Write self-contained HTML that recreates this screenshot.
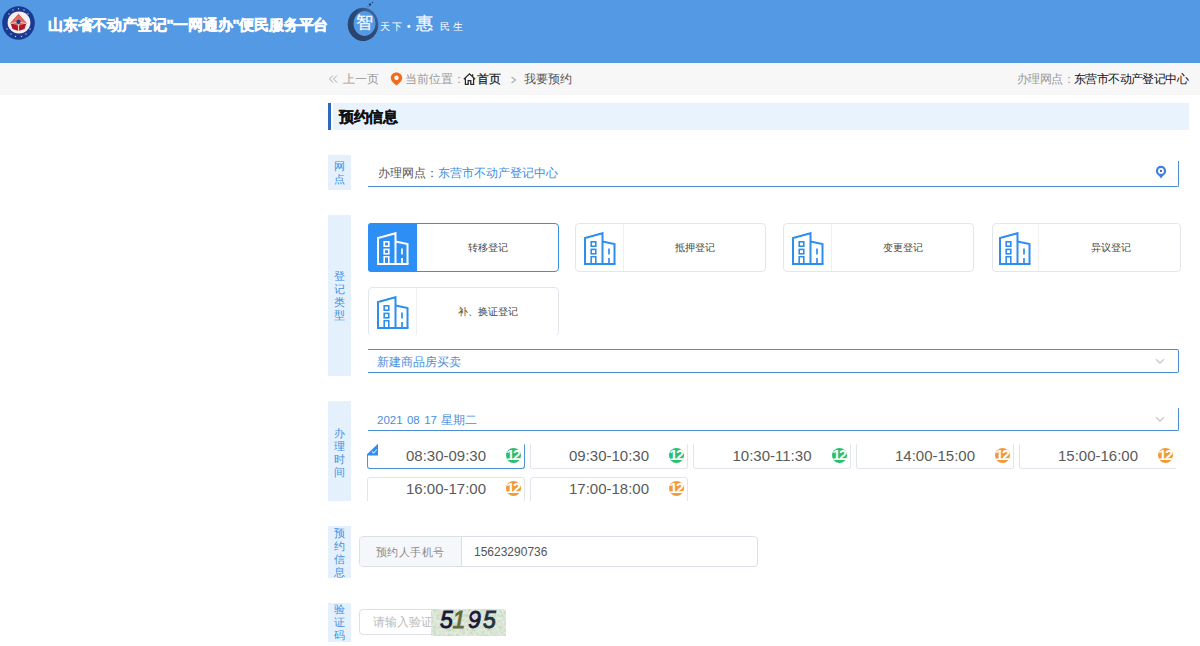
<!DOCTYPE html>
<html><head><meta charset="utf-8">
<style>
*{margin:0;padding:0;box-sizing:border-box}
html,body{width:1200px;height:646px;overflow:hidden;background:#fff;font-family:"Liberation Sans",sans-serif;position:relative}
.abs{position:absolute;white-space:nowrap}
#hdr{position:absolute;left:0;top:0;width:1200px;height:63px;background:#5499e3}
#crumb{position:absolute;left:0;top:63px;width:1200px;height:32px;background:#f7f7f7}
.t12{font-size:12px;line-height:16px}
.lab{position:absolute;left:328px;width:23px;background:#e4f1fd;color:#3f8fe4;font-size:11px;line-height:13px;text-align:center;display:flex;align-items:center;justify-content:center;white-space:normal;word-break:break-all}
.lab span{display:block;width:12px}
.card{position:absolute;width:190px;height:49px;border:1px solid #e3e6eb;border-radius:4px;background:#fff}
.card .ic{position:absolute;left:0;top:0;width:48px;height:47px;border-right:1px solid #eef0f3}
.card .ic svg{position:absolute;left:8px;top:8px}
.card .tx{position:absolute;left:48px;right:0;top:0;height:47px;line-height:47px;text-align:center;font-size:10px;color:#444}
.card.sel{border-color:#3c8ee4}
.card.sel .ic{background:#2d8ff5;border-right:none;border-radius:3px 0 0 3px;left:-1px;top:-1px;width:49px;height:49px}
.card.sel .ic svg{left:9px;top:9px}
.slot{position:absolute;width:158px;height:25px;border:1px solid #e2e6ec;border-top-color:#fff;border-radius:0 0 3px 3px}
.slot .tm{position:absolute;left:0;right:0;top:3px;text-align:center;font-size:15px;line-height:16px;color:#5a5a5a}
.slot .bd{position:absolute;right:3px;top:3px;width:15px;height:15px;border-radius:50%;color:#fff;font-weight:bold;font-size:14.5px;line-height:15px;text-align:center;letter-spacing:-1.6px;text-indent:-1px;overflow:visible}
.slot.r2{border-top-color:#e2e6ec;border-radius:3px 3px 0 0}
.slot.sel{border-color:#4d92dc;border-top-color:#fff}
.g{background:#28c06a}.o{background:#f39a36}
</style></head><body>
<div id="hdr"></div>
<div id="crumb"></div>

<!-- logo -->
<svg class="abs" style="left:0px;top:0px" width="40" height="44" viewBox="0 0 40 44">
 <ellipse cx="18.5" cy="23" rx="16.3" ry="16.8" fill="#1a3a92"/>
 <ellipse cx="19" cy="22.5" rx="11.4" ry="11" fill="#f3f0f3"/>
 <g fill="#fff" opacity="0.75"><circle cx="9" cy="14" r="0.7"/><circle cx="13" cy="10" r="0.7"/><circle cx="18.5" cy="8.7" r="0.7"/><circle cx="24" cy="10" r="0.7"/><circle cx="28" cy="14" r="0.7"/>
 <circle cx="7" cy="29" r="0.7"/><circle cx="11" cy="34" r="0.7"/><circle cx="15.5" cy="36.5" r="0.7"/><circle cx="21.5" cy="36.5" r="0.7"/><circle cx="26" cy="34" r="0.7"/><circle cx="30" cy="29" r="0.7"/></g>
 <path d="M18.5 14 L26.5 23 L24.5 29 L18.5 31 L12.5 29 L10.5 23 Z" fill="#b3162a"/>
 <path d="M18.5 14 L26.5 23 L18.5 26 L10.5 23 Z" fill="#e06a5e"/>
 <path d="M11 23.5 L18.5 22 L26 23.5 M18.5 22 V31" stroke="#f2c8b8" stroke-width="1.2" fill="none"/>
 <circle cx="18.5" cy="21.8" r="2.1" fill="#1a3a92"/>
</svg>
<div class="abs" style="left:48px;top:14px;font-size:15px;line-height:22px;font-weight:bold;color:#fff;letter-spacing:-0.2px;-webkit-text-stroke:0.5px #fff">山东省不动产登记"一网通办"便民服务平台</div>
<!-- slogan -->
<svg class="abs" style="left:340px;top:0px" width="50" height="46" viewBox="340 0 50 46">
 <defs><linearGradient id="rg" x1="0" y1="1" x2="1" y2="0"><stop offset="0" stop-color="#273f66"/><stop offset="0.6" stop-color="#2b4a78"/><stop offset="1" stop-color="#4a78b8"/></linearGradient></defs>
 <path fill-rule="evenodd" fill="url(#rg)" d="M378.3 24.4 A15.3 16.7 0 1 1 378.3 24.39 Z M375.5 23.5 A11 12.5 0 1 0 375.5 23.51 Z"/>
 <circle cx="370" cy="4.5" r="1.2" fill="#26406a"/><circle cx="372.5" cy="2.5" r="0.7" fill="#26406a"/><circle cx="368" cy="6.5" r="0.5" fill="#26406a"/>
</svg>
<div class="abs" style="left:356px;top:12px;font-size:17px;line-height:22px;color:#f4f8ff;-webkit-text-stroke:0.3px #f4f8ff">智</div>
<div class="abs" style="left:380px;top:20px;font-family:'Liberation Serif',serif;font-size:10px;line-height:14px;color:#fff;letter-spacing:2px">天下</div>
<div class="abs" style="left:407px;top:20px;font-size:10px;line-height:14px;color:#fff;font-weight:bold">•</div>
<div class="abs" style="left:416px;top:12px;font-family:'Liberation Serif',serif;font-size:17px;line-height:24px;color:#f4f8ff;-webkit-text-stroke:0.3px #f4f8ff">惠</div>
<div class="abs" style="left:440px;top:20px;font-family:'Liberation Serif',serif;font-size:10px;line-height:14px;color:#fff;letter-spacing:3px">民生</div>

<!-- breadcrumb -->
<svg class="abs" style="left:328px;top:75px" width="10" height="8" viewBox="0 0 10 8"><path d="M5 0.5 L1.5 4 L5 7.5 M9 0.5 L5.5 4 L9 7.5" stroke="#a8a8a8" stroke-width="1" fill="none"/></svg>
<div class="abs t12" style="left:343px;top:71px;color:#999">上一页</div>
<svg class="abs" style="left:390px;top:72px" width="13" height="14" viewBox="0 0 13 14">
 <path d="M6.5 0.5 C3.2 0.5 0.8 2.9 0.8 6 C0.8 9 4 11.5 6.5 13.6 C9 11.5 12.2 9 12.2 6 C12.2 2.9 9.8 0.5 6.5 0.5 Z" fill="#f26d1b"/>
 <circle cx="6.5" cy="5.8" r="2.2" fill="#fff"/>
</svg>
<div class="abs t12" style="left:405px;top:71px;color:#999">当前位置：</div>
<svg class="abs" style="left:463px;top:73px" width="13" height="12" viewBox="0 0 13 12">
 <path d="M0.8 6.2 L6.5 0.9 L12.2 6.2 M2.4 4.8 V11.3 H5.2 V7.6 H7.8 V11.3 H10.6 V4.8 M9.6 1.3 V3.8" stroke="#2a2a2a" stroke-width="1.25" fill="none" stroke-linejoin="miter"/>
</svg>
<div class="abs t12" style="left:477px;top:71px;color:#1a1a1a;-webkit-text-stroke:0.25px #1a1a1a">首页</div>
<svg class="abs" style="left:510px;top:76px" width="7" height="8" viewBox="0 0 7 8"><path d="M1.5 1 L5.5 4 L1.5 7" stroke="#a9adb5" stroke-width="1.2" fill="none"/></svg>
<div class="abs t12" style="left:524px;top:71px;color:#555">我要预约</div>
<div class="abs" style="left:1017px;top:71px;font-size:12px;line-height:16px;color:#999;letter-spacing:-0.6px">办理网点：<span style="color:#111">东营市不动产登记中心</span></div>

<!-- title -->
<div class="abs" style="left:328px;top:103px;width:3px;height:27px;background:#3068c0"></div>
<div class="abs" style="left:333px;top:103px;width:856px;height:27px;background:#e9f3fd"></div>
<div class="abs" style="left:339px;top:106px;font-size:15px;line-height:21px;font-weight:bold;color:#111;letter-spacing:-0.4px;-webkit-text-stroke:0.3px #111">预约信息</div>

<!-- labels -->
<div class="lab" style="top:155px;height:35px"><span>网点</span></div>
<div class="lab" style="top:215px;height:161px"><span>登记类型</span></div>
<div class="lab" style="top:401px;height:100px;padding-top:3px"><span>办理时间</span></div>
<div class="lab" style="top:526px;height:52px;padding-top:2px"><span>预约信息</span></div>
<div class="lab" style="top:603px;height:39px"><span>验证码</span></div>

<!-- site input -->
<div class="abs" style="left:368px;top:161px;width:811px;height:26px;border-bottom:1px solid #4a8ad6;border-right:1px solid #4a8ad6;border-radius:0 0 2px 0"></div>
<div class="abs t12" style="left:378px;top:165px;color:#555">办理网点：<span style="color:#3f8ee0">东营市不动产登记中心</span></div>
<svg class="abs" style="left:1155px;top:165px" width="12" height="15" viewBox="0 0 12 15">
 <path d="M2.2 8.5 L6 13.6 L9.8 8.5 Z" fill="#3f7fe0"/>
 <circle cx="6" cy="5.9" r="4" fill="#fff" stroke="#3f7fe0" stroke-width="2.2"/><circle cx="6" cy="5.9" r="1.1" fill="#3a5c9a"/>
</svg>

<!-- cards -->
<div class="card sel" style="left:368px;top:223px;width:191px"><div class="ic"><svg width="32" height="33" viewBox="0 0 32 33"><g fill="none" stroke="#fff" stroke-width="2" stroke-linejoin="miter">
<path d="M1 32 V6 L18.5 1.2 V32"/><path d="M18.5 9.5 L30.5 12 V32"/><path d="M0 32 H31.5"/>
<g stroke-width="1.6"><rect x="7.2" y="9.8" width="4.6" height="4.4"/><rect x="7.2" y="17.4" width="4.6" height="4.4"/><path d="M7.2 32 V24.8 H11.8 V32"/></g>
<path d="M25 16.5 V22.5 M25 26 V32" stroke-width="1.7"/></g></svg></div><div class="tx">转移登记</div></div>
<div class="card" style="left:575px;top:223px;width:191px"><div class="ic"><svg width="32" height="33" viewBox="0 0 32 33"><g fill="none" stroke="#2e8ef0" stroke-width="2" stroke-linejoin="miter">
<path d="M1 32 V6 L18.5 1.2 V32"/><path d="M18.5 9.5 L30.5 12 V32"/><path d="M0 32 H31.5"/>
<g stroke-width="1.6"><rect x="7.2" y="9.8" width="4.6" height="4.4"/><rect x="7.2" y="17.4" width="4.6" height="4.4"/><path d="M7.2 32 V24.8 H11.8 V32"/></g>
<path d="M25 16.5 V22.5 M25 26 V32" stroke-width="1.7"/></g></svg></div><div class="tx">抵押登记</div></div>
<div class="card" style="left:783px;top:223px;width:191px"><div class="ic"><svg width="32" height="33" viewBox="0 0 32 33"><g fill="none" stroke="#2e8ef0" stroke-width="2" stroke-linejoin="miter">
<path d="M1 32 V6 L18.5 1.2 V32"/><path d="M18.5 9.5 L30.5 12 V32"/><path d="M0 32 H31.5"/>
<g stroke-width="1.6"><rect x="7.2" y="9.8" width="4.6" height="4.4"/><rect x="7.2" y="17.4" width="4.6" height="4.4"/><path d="M7.2 32 V24.8 H11.8 V32"/></g>
<path d="M25 16.5 V22.5 M25 26 V32" stroke-width="1.7"/></g></svg></div><div class="tx">变更登记</div></div>
<div class="card" style="left:992px;top:223px;width:189px"><div class="ic" style="width:46px"><svg style="left:6px" width="32" height="33" viewBox="0 0 32 33"><g fill="none" stroke="#2e8ef0" stroke-width="2" stroke-linejoin="miter">
<path d="M1 32 V6 L18.5 1.2 V32"/><path d="M18.5 9.5 L30.5 12 V32"/><path d="M0 32 H31.5"/>
<g stroke-width="1.6"><rect x="7.2" y="9.8" width="4.6" height="4.4"/><rect x="7.2" y="17.4" width="4.6" height="4.4"/><path d="M7.2 32 V24.8 H11.8 V32"/></g>
<path d="M25 16.5 V22.5 M25 26 V32" stroke-width="1.7"/></g></svg></div><div class="tx">异议登记</div></div>
<div class="abs" style="left:368px;top:287px;width:191px;height:48px;overflow:hidden"><div class="card" style="left:0;top:0;width:191px"><div class="ic"><svg width="32" height="33" viewBox="0 0 32 33"><g fill="none" stroke="#2e8ef0" stroke-width="2" stroke-linejoin="miter">
<path d="M1 32 V6 L18.5 1.2 V32"/><path d="M18.5 9.5 L30.5 12 V32"/><path d="M0 32 H31.5"/>
<g stroke-width="1.6"><rect x="7.2" y="9.8" width="4.6" height="4.4"/><rect x="7.2" y="17.4" width="4.6" height="4.4"/><path d="M7.2 32 V24.8 H11.8 V32"/></g>
<path d="M25 16.5 V22.5 M25 26 V32" stroke-width="1.7"/></g></svg></div><div class="tx">补、换证登记</div></div></div>

<!-- type select -->
<div class="abs" style="left:368px;top:349px;width:811px;height:24px;border:1px solid #4a8ad6;border-left:none;border-radius:0 2px 2px 0"></div>
<div class="abs t12" style="left:377px;top:354px;color:#4a8edc">新建商品房买卖</div>
<svg class="abs" style="left:1155px;top:358px" width="10" height="7" viewBox="0 0 10 7"><path d="M1 1.2 L5 5 L9 1.2" stroke="#c9c9c9" stroke-width="1.3" fill="none"/></svg>
<!-- date select -->
<div class="abs" style="left:368px;top:408px;width:811px;height:23px;border-bottom:1px solid #4a8ad6;border-right:1px solid #4a8ad6;border-radius:0 0 2px 0"></div>
<div class="abs" style="left:377px;top:412px;font-size:11.5px;line-height:16px;color:#4a8edc;word-spacing:1.2px">2021 08 17 <span style="word-spacing:0">星期二</span></div>
<svg class="abs" style="left:1155px;top:416px" width="10" height="7" viewBox="0 0 10 7"><path d="M1 1.2 L5 5 L9 1.2" stroke="#c9c9c9" stroke-width="1.3" fill="none"/></svg>

<!-- slots -->
<div class="abs" style="left:360px;top:440px;width:840px;height:61px;overflow:hidden">
<div class="slot sel" style="left:7px;top:4px"><div class="tm">08:30-09:30</div><div class="bd g">12</div></div>
<div class="slot" style="left:170px;top:4px"><div class="tm">09:30-10:30</div><div class="bd g">12</div></div>
<div class="slot" style="left:333px;top:4px"><div class="tm">10:30-11:30</div><div class="bd g">12</div></div>
<div class="slot" style="left:496px;top:4px"><div class="tm">14:00-15:00</div><div class="bd o">12</div></div>
<div class="slot" style="left:659px;top:4px;border-right-color:#fff"><div class="tm">15:00-16:00</div><div class="bd o">12</div></div>
<div class="slot r2" style="left:7px;top:37px"><div class="tm">16:00-17:00</div><div class="bd o">12</div></div>
<div class="slot r2" style="left:170px;top:37px"><div class="tm">17:00-18:00</div><div class="bd o">12</div></div>
</div>

<div class="abs" style="left:366px;top:443px;width:3px;height:11px;background:#fff"></div>
<svg class="abs" style="left:367px;top:443px" width="12" height="13" viewBox="0 0 12 13"><path d="M0.3 11.2 Q0.3 10.8 1 10.2 L11 0.8 V12.6 H0.3 Z" fill="#2d8ff5"/><path d="M5 8.5 L6.8 10 L9.8 6.5" stroke="#cfe6ff" stroke-width="1.1" fill="none"/></svg>

<!-- phone -->
<div class="abs" style="left:359px;top:536px;width:399px;height:31px;border:1px solid #dcdfe6;border-radius:4px;overflow:hidden">
 <div style="position:absolute;left:0;top:0;width:102px;height:29px;background:#f5f7fa;border-right:1px solid #dcdfe6"></div>
</div>
<div class="abs" style="left:376px;top:544px;font-size:11px;line-height:16px;letter-spacing:0.4px;color:#8a8a8a">预约人手机号</div>
<div class="abs t12" style="left:474px;top:544px;color:#555">15623290736</div>

<!-- captcha -->
<div class="abs" style="left:359px;top:609px;width:147px;height:26px;border:1px solid #dcdfe6;border-radius:4px;overflow:hidden"></div>
<div class="abs" style="left:360px;top:610px;width:72px;height:24px;overflow:hidden"><div class="abs t12" style="left:13px;top:4px;color:#bbb">请输入验证码</div></div>
<svg class="abs" style="left:431px;top:609px" width="75" height="27" viewBox="0 0 75 27">
 <defs><filter id="nz" x="0" y="0" width="100%" height="100%"><feTurbulence type="fractalNoise" baseFrequency="0.35" numOctaves="2" seed="7"/><feColorMatrix values="0 0 0 0 0.55  0 0 0 0 0.68  0 0 0 0 0.52  0 0 0 2.2 -0.8"/></filter></defs>
 <rect width="75" height="27" rx="2" fill="#e2ebdd"/>
 <rect width="75" height="27" rx="2" filter="url(#nz)"/>
 <g font-family="Liberation Sans" font-size="23" font-style="italic" stroke-width="0.9">
 <text x="9" y="19" fill="#15163a" stroke="#15163a">5</text>
 <text x="21.5" y="19" fill="#6a6838" stroke="#6a6838">1</text>
 <text x="37" y="19" fill="#1b1838" stroke="#1b1838">9</text>
 <text x="52" y="19" fill="#24313e" stroke="#24313e">5</text>
 </g>
 <ellipse cx="43" cy="7.5" rx="2.3" ry="2" fill="#ddd4ea"/>
</svg>
</body></html>
